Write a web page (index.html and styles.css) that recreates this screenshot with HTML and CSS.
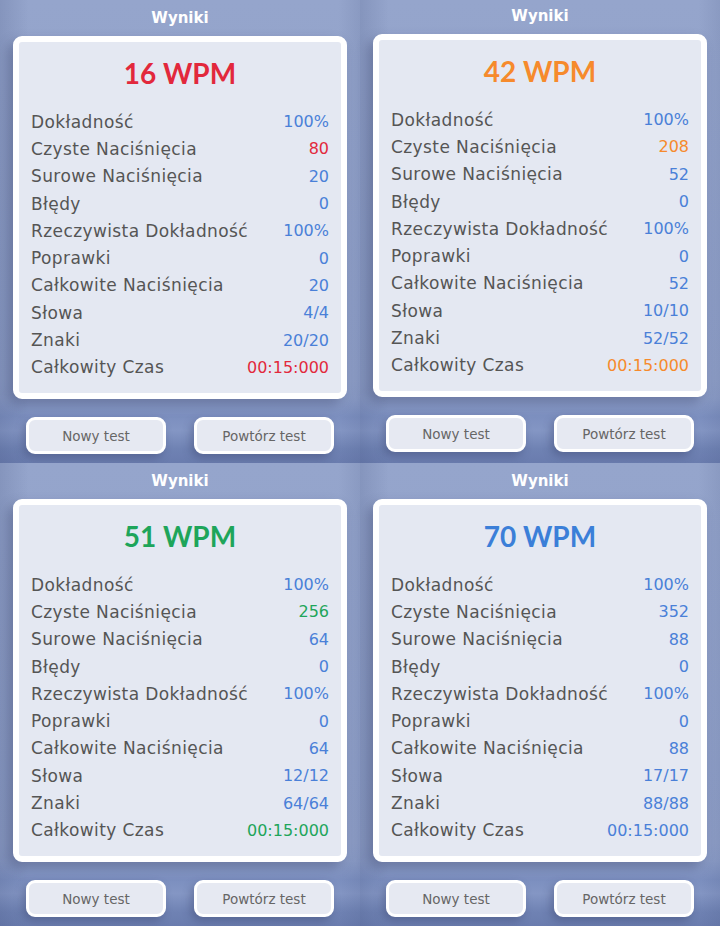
FILE: index.html
```html
<!DOCTYPE html>
<html lang="pl">
<head>
    <meta charset="UTF-8">
    <meta name="viewport" content="width=device-width, initial-scale=1.0">
    <title>Wyniki</title>
    <link rel="stylesheet" href="styles.css">
</head>
<body>
    <main class="grid">
        <!-- 16 WPM -->
        <section class="panel">
            <h2 class="panel-title">Wyniki</h2>
            <div class="card">
                <div class="wpm red">16 WPM</div>
                <ul class="stats">
                    <li><span>Dokładność</span><b>100%</b></li>
                    <li><span>Czyste Naciśnięcia</span><b class="red">80</b></li>
                    <li><span>Surowe Naciśnięcia</span><b>20</b></li>
                    <li><span>Błędy</span><b>0</b></li>
                    <li><span>Rzeczywista Dokładność</span><b>100%</b></li>
                    <li><span>Poprawki</span><b>0</b></li>
                    <li><span>Całkowite Naciśnięcia</span><b>20</b></li>
                    <li><span>Słowa</span><b>4/4</b></li>
                    <li><span>Znaki</span><b>20/20</b></li>
                    <li><span>Całkowity Czas</span><b class="red">00:15:000</b></li>
                </ul>
            </div>
            <div class="actions">
                <button class="btn">Nowy test</button>
                <button class="btn">Powtórz test</button>
            </div>
        </section>

        <!-- 42 WPM -->
        <section class="panel raised">
            <h2 class="panel-title">Wyniki</h2>
            <div class="card">
                <div class="wpm orange">42 WPM</div>
                <ul class="stats">
                    <li><span>Dokładność</span><b>100%</b></li>
                    <li><span>Czyste Naciśnięcia</span><b class="orange">208</b></li>
                    <li><span>Surowe Naciśnięcia</span><b>52</b></li>
                    <li><span>Błędy</span><b>0</b></li>
                    <li><span>Rzeczywista Dokładność</span><b>100%</b></li>
                    <li><span>Poprawki</span><b>0</b></li>
                    <li><span>Całkowite Naciśnięcia</span><b>52</b></li>
                    <li><span>Słowa</span><b>10/10</b></li>
                    <li><span>Znaki</span><b>52/52</b></li>
                    <li><span>Całkowity Czas</span><b class="orange">00:15:000</b></li>
                </ul>
            </div>
            <div class="actions">
                <button class="btn">Nowy test</button>
                <button class="btn">Powtórz test</button>
            </div>
        </section>

        <!-- 51 WPM -->
        <section class="panel">
            <h2 class="panel-title">Wyniki</h2>
            <div class="card">
                <div class="wpm green">51 WPM</div>
                <ul class="stats">
                    <li><span>Dokładność</span><b>100%</b></li>
                    <li><span>Czyste Naciśnięcia</span><b class="green">256</b></li>
                    <li><span>Surowe Naciśnięcia</span><b>64</b></li>
                    <li><span>Błędy</span><b>0</b></li>
                    <li><span>Rzeczywista Dokładność</span><b>100%</b></li>
                    <li><span>Poprawki</span><b>0</b></li>
                    <li><span>Całkowite Naciśnięcia</span><b>64</b></li>
                    <li><span>Słowa</span><b>12/12</b></li>
                    <li><span>Znaki</span><b>64/64</b></li>
                    <li><span>Całkowity Czas</span><b class="green">00:15:000</b></li>
                </ul>
            </div>
            <div class="actions">
                <button class="btn">Nowy test</button>
                <button class="btn">Powtórz test</button>
            </div>
        </section>

        <!-- 70 WPM -->
        <section class="panel">
            <h2 class="panel-title">Wyniki</h2>
            <div class="card">
                <div class="wpm blue">70 WPM</div>
                <ul class="stats">
                    <li><span>Dokładność</span><b>100%</b></li>
                    <li><span>Czyste Naciśnięcia</span><b>352</b></li>
                    <li><span>Surowe Naciśnięcia</span><b>88</b></li>
                    <li><span>Błędy</span><b>0</b></li>
                    <li><span>Rzeczywista Dokładność</span><b>100%</b></li>
                    <li><span>Poprawki</span><b>0</b></li>
                    <li><span>Całkowite Naciśnięcia</span><b>88</b></li>
                    <li><span>Słowa</span><b>17/17</b></li>
                    <li><span>Znaki</span><b>88/88</b></li>
                    <li><span>Całkowity Czas</span><b>00:15:000</b></li>
                </ul>
            </div>
            <div class="actions">
                <button class="btn">Nowy test</button>
                <button class="btn">Powtórz test</button>
            </div>
        </section>
    </main>
</body>
</html>
```

FILE: styles.css
```css
:root {
    --bg-top: #94a4cb;
    --card-bg: #e4e8f2;
    --label: #555555;
    --value: #4a80d8;
    --red: #e2283c;
    --orange: #f68a2c;
    --green: #1ea55a;
    --blue: #3b7fd8;
}

* {
    margin: 0;
    padding: 0;
    box-sizing: border-box;
}

body {
    font-family: "DejaVu Sans", "Noto Sans", sans-serif;
    background: var(--bg-top);
    width: 720px;
    height: 926px;
    overflow: hidden;
}

.grid {
    display: grid;
    grid-template-columns: 360px 360px;
    grid-template-rows: 463px 463px;
}

/* one screenshot tile */
.panel {
    display: flex;
    flex-direction: column;
    align-items: center;
    padding-top: 8px;
    background:
        linear-gradient(90deg, rgba(60, 75, 120, 0.18), rgba(60, 75, 120, 0) 8%, rgba(60, 75, 120, 0) 94%, rgba(60, 75, 120, 0.12)),
        linear-gradient(180deg, #95a5cc 0%, #90a0c8 82%, #8c9dc7 86%, #7c8fbf 90%, #8496c4 93%, #6f82b3 97%, #6a7cae 100%);
}

.panel.raised {
    padding-top: 6px;
}

.panel-title {
    font-size: 15px;
    line-height: 20px;
    font-weight: bold;
    color: #fff;
    height: 20px;
}

.card {
    width: 334px;
    height: 363px;
    margin-top: 8px;
    background: var(--card-bg);
    border: 6px solid #fff;
    border-radius: 9px;
    box-shadow: -5px 6px 12px rgba(45, 55, 95, 0.35);
    padding: 0 12px;
}

.wpm {
    text-align: center;
    font-family: Lato, "DejaVu Sans", sans-serif;
    font-size: 28px;
    font-weight: bold;
    line-height: 34px;
    margin-top: 14px;
    margin-bottom: 18px;
}

.stats {
    list-style: none;
}

.stats li {
    display: flex;
    justify-content: space-between;
    align-items: center;
    height: 27.3px;
    font-size: 17px;
    letter-spacing: 0.4px;
    color: var(--label);
}

.stats b {
    font-weight: normal;
    font-size: 16px;
    letter-spacing: 0;
    color: var(--value);
}

.red { color: var(--red) !important; }
.orange { color: var(--orange) !important; }
.green { color: var(--green) !important; }
.blue { color: var(--blue) !important; }

.actions {
    display: flex;
    gap: 28px;
    margin-top: 18px;
}

.btn {
    width: 140px;
    height: 37px;
    background: #e6e9f2;
    border: 3px solid #fff;
    border-radius: 9px;
    box-shadow: -3px 4px 8px rgba(45, 55, 95, 0.35);
    font-family: inherit;
    font-size: 13.5px;
    color: #666;
}
```
